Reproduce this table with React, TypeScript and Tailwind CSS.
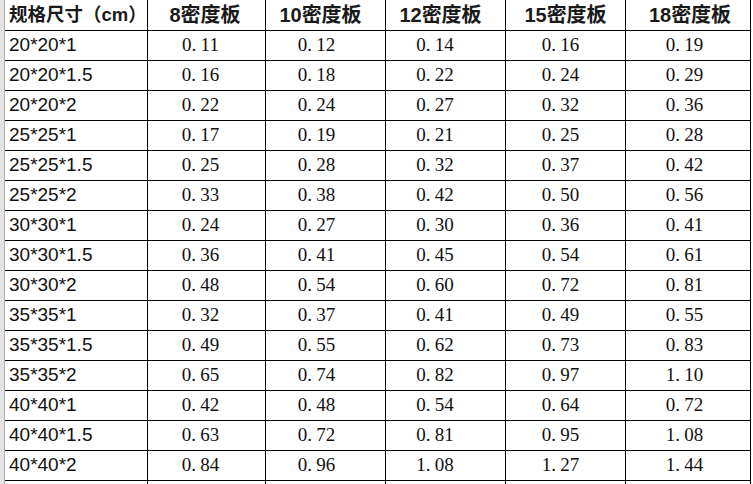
import React from "react";

const rows: [string, string[]][] = [
  ["20*20*1", ["0.11", "0.12", "0.14", "0.16", "0.19"]],
  ["20*20*1.5", ["0.16", "0.18", "0.22", "0.24", "0.29"]],
  ["20*20*2", ["0.22", "0.24", "0.27", "0.32", "0.36"]],
  ["25*25*1", ["0.17", "0.19", "0.21", "0.25", "0.28"]],
  ["25*25*1.5", ["0.25", "0.28", "0.32", "0.37", "0.42"]],
  ["25*25*2", ["0.33", "0.38", "0.42", "0.50", "0.56"]],
  ["30*30*1", ["0.24", "0.27", "0.30", "0.36", "0.41"]],
  ["30*30*1.5", ["0.36", "0.41", "0.45", "0.54", "0.61"]],
  ["30*30*2", ["0.48", "0.54", "0.60", "0.72", "0.81"]],
  ["35*35*1", ["0.32", "0.37", "0.41", "0.49", "0.55"]],
  ["35*35*1.5", ["0.49", "0.55", "0.62", "0.73", "0.83"]],
  ["35*35*2", ["0.65", "0.74", "0.82", "0.97", "1.10"]],
  ["40*40*1", ["0.42", "0.48", "0.54", "0.64", "0.72"]],
  ["40*40*1.5", ["0.63", "0.72", "0.81", "0.95", "1.08"]],
  ["40*40*2", ["0.84", "0.96", "1.08", "1.27", "1.44"]],
];

const heads = ["8", "10", "12", "15", "18"];
const pads = ["pr-[12px]", "pr-[18px]", "pr-[21px]", "pr-[10px]", "pr-[7px]"];
const headPads = ["pr-[3px]", "pr-[10px]", "pr-[10px]", "pr-[0px]", "pl-[4px]"];

const grid = "grid grid-cols-[143px_118px_120px_120px_120px_125px]";

function Num({ v }: { v: string }) {
  const [a, b] = v.split(".");
  return (
    <span className="inline-flex items-baseline whitespace-nowrap">
      <span>{a}</span>
      <span className="inline-block w-[9px]">.</span>
      <span>{b}</span>
    </span>
  );
}

export default function App() {
  return (
    <div className="w-[753px] h-[484px] overflow-hidden bg-white flex flex-col">
      <div className="h-[1px] bg-[#c8c8c8] ml-[5px]" />
      <div className="flex flex-1">
        <div className="w-[5px] bg-[#e4e4e4] border-r border-[#b0b0b0] shrink-0" />
        <div className="flex flex-col">
          <div className={`${grid} h-[31px]`}>
            <div className="border-r border-b border-black flex items-center pl-[4px] text-[18.5px] font-bold text-[#1a1a1a] font-['Liberation_Sans','Noto_Sans_CJK_SC',sans-serif] whitespace-nowrap">
              规格尺寸（cm）
            </div>
            {heads.map((h, i) => (
              <div
                key={h}
                className={`border-r border-b border-black flex items-center justify-center text-[20px] font-bold text-[#1a1a1a] font-['Liberation_Sans','Noto_Sans_CJK_SC',sans-serif] whitespace-nowrap ${headPads[i]}`}
              >
                {h}密度板
              </div>
            ))}
          </div>
          {rows.map(([label, vals]) => (
            <div key={label} className={`${grid} h-[30px]`}>
              <div className="border-r border-b border-black flex items-center pl-[4px] text-[19px] text-[#111] font-['Liberation_Sans',sans-serif] whitespace-nowrap">
                {label}
              </div>
              {vals.map((v, i) => (
                <div
                  key={i}
                  className={`border-r border-b border-black flex items-center justify-center text-[19px] text-[#111] font-['Liberation_Serif',serif] ${pads[i]}`}
                >
                  <Num v={v} />
                </div>
              ))}
            </div>
          ))}
          <div className={`${grid} h-[30px]`}>
            {[0, 1, 2, 3, 4, 5].map((i) => (
              <div key={i} className="border-r border-black" />
            ))}
          </div>
        </div>
      </div>
    </div>
  );
}
